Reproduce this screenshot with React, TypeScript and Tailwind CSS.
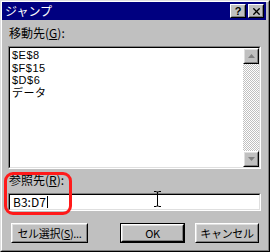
import { X } from 'lucide-react';

const font = { fontFamily: '"Noto Sans CJK JP", "Liberation Sans", sans-serif' };
const listFont = { fontFamily: '"Liberation Sans", "Noto Sans CJK JP", sans-serif' };

// raised win98 bevel: outer white/black, inner light/dark
const raised = 'border border-t-white border-l-white border-b-black border-r-black';
const raisedInner = 'border border-t-[#dfdfdf] border-l-[#dfdfdf] border-b-[#808080] border-r-[#808080]';
const sunken = 'border border-t-[#808080] border-l-[#808080] border-b-white border-r-white';
const sunkenInner = 'border border-t-black border-l-black border-b-[#dfdfdf] border-r-[#dfdfdf]';

function TitleBtn({ children }: { children: React.ReactNode }) {
  return (
    <div className={`${raised} w-[16px] h-[14px] bg-[#c0c0c0]`}>
      <div className="w-full h-full border border-t-[#c0c0c0] border-l-[#c0c0c0] border-b-[#808080] border-r-[#808080] flex items-center justify-center">
        {children}
      </div>
    </div>
  );
}

function Button({ children, wide, def }: { children: React.ReactNode; wide: string; def?: boolean }) {
  const btn = (
    <div className={`${raised} h-full bg-[#c0c0c0]`}>
      <div className={`${raisedInner} h-full flex items-center justify-center text-[11px] leading-[12px] text-black whitespace-nowrap tracking-[-0.3px]`}>
        {children}
      </div>
    </div>
  );
  return def ? <div className={`${wide} h-[20px] border border-black`}>{btn}</div> : <div className={`${wide} h-[20px]`}>{btn}</div>;
}

function ScrollArrow({ up }: { up?: boolean }) {
  return (
    <div className={`${raised} w-[16px] h-[16px] bg-[#c0c0c0]`}>
      <div className={`${raisedInner} w-full h-full flex items-center justify-center`}>
        <svg width="7" height="5" viewBox="0 0 7 5">
          <path d={up ? 'M0 4 L3.5 0 L7 4 Z' : 'M0 0 L3.5 4 L7 0 Z'} fill="#808080" />
        </svg>
      </div>
    </div>
  );
}

export default function App() {
  const items = ['$E$8', '$F$15', '$D$6', 'データ'];
  return (
    <div className="relative w-[270px] h-[252px] bg-[#c0c0c0] border border-t-[#dfdfdf] border-l-[#dfdfdf] border-b-black border-r-black" style={font}>
      <div className="w-full h-full border border-t-white border-l-white border-b-[#808080] border-r-[#808080] flex flex-col">
        <div className="mr-[2px] h-[18px] bg-[#000080] flex items-center justify-between pl-[3px] pr-[2px]">
          <span className="text-white text-[12px] leading-[12px]">ジャンプ</span>
          <div className="flex gap-[2px]">
            <TitleBtn><span className="text-[11px] leading-[11px] font-bold text-black" style={{ fontFamily: '"Liberation Sans", sans-serif' }}>?</span></TitleBtn>
            <TitleBtn><X size={11} strokeWidth={3} color="#000" /></TitleBtn>
          </div>
        </div>

        <div className="flex flex-col pl-[6px] pr-[7px]">
          <div className="mt-[6px] ml-[1px] text-[12px] leading-[14px] text-black">
            移動先(<span className="underline">G</span>):
          </div>
          <div className={`${sunken} mt-[6px] h-[123px]`}>
            <div className={`${sunkenInner} h-full bg-white flex`}>
              <div className="flex-1 pl-[2px] pt-[1px] text-[11px] leading-[12.5px] tracking-[0.5px] text-black" style={listFont}>
                {items.map((it) => (
                  <div key={it} className="h-[12.5px]">{it}</div>
                ))}
              </div>
              <div className="w-[16px] flex flex-col">
                <ScrollArrow up />
                <div className="flex-1 bg-[repeating-conic-gradient(#c0c0c0_0_25%,#fff_0_50%)] bg-[length:2px_2px]" />
                <ScrollArrow />
              </div>
            </div>
          </div>

          <div className="mt-[4px] ml-[1px] text-[12px] leading-[14px] text-black">
            参照先(<span className="underline">R</span>):
          </div>
          <div className={`${sunken} mt-[6px] h-[18px]`}>
            <div className={`${sunkenInner} h-full bg-white flex items-center pl-[3px] text-[12px] leading-[12px] text-black`}>
              B3:D7<span className="inline-block w-[1px] h-[12px] bg-black ml-[1px]" />
            </div>
          </div>

          <div className="mt-[12px] flex items-center pl-[3px]">
            <Button wide="w-[77px]">セル選択(<span className="underline">S</span>)...</Button>
            <div className="ml-[32px]">
              <Button wide="w-[65px]" def>OK</Button>
            </div>
            <div className="ml-[10px]">
              <Button wide="w-[64px]">キャンセル</Button>
            </div>
          </div>
        </div>
      </div>

      {/* red annotation */}
      <div className="absolute left-[3px] top-[171px] w-[68px] h-[43px] rounded-[9px] border-[3px] border-[#ff1a1a]" />

      {/* mouse i-beam */}
      <svg className="absolute left-[152px] top-[189px]" width="9" height="18" viewBox="0 0 9 18">
        <path d="M1 1.5 H3.5 M5.5 1.5 H8 M4.5 2 V16 M1 16.5 H3.5 M5.5 16.5 H8 M3.5 2 H5.5 M3.5 16 H5.5" stroke="#000" strokeWidth="1" fill="none" />
      </svg>
    </div>
  );
}
